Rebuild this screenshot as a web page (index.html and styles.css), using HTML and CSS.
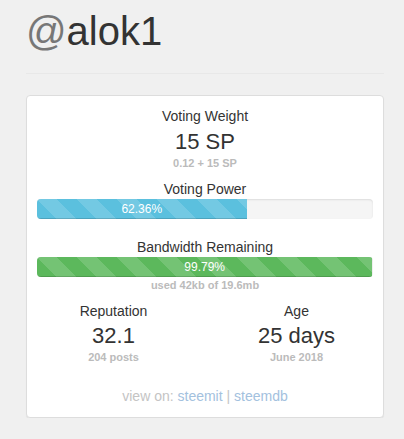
FILE: index.html
```html
<!DOCTYPE html>
<html>
<head>
<meta charset="utf-8">
<link rel="stylesheet" href="styles.css">
</head>
<body>
<div class="page">
  <h1 class="title"><span class="at">@</span>alok1</h1>
  <hr class="rule">
  <div class="card">
    <div class="label">Voting Weight</div>
    <div class="big big-first">15 SP</div>
    <div class="sub">0.12 + 15 SP</div>
    <div class="label label-gap">Voting Power</div>
    <div class="progress">
      <div class="bar bar-blue" style="width: 62.36%">62.36%</div>
    </div>
    <div class="label label-bw">Bandwidth Remaining</div>
    <div class="progress">
      <div class="bar bar-green" style="width: 99.79%">99.79%</div>
    </div>
    <div class="sub">used 42kb of 19.6mb</div>
    <div class="stats">
      <div class="stat">
        <div class="label">Reputation</div>
        <div class="big">32.1</div>
        <div class="sub">204 posts</div>
      </div>
      <div class="stat">
        <div class="label">Age</div>
        <div class="big">25 days</div>
        <div class="sub">June 2018</div>
      </div>
    </div>
    <div class="links">view on: <a href="#">steemit</a> | <a href="#">steemdb</a></div>
  </div>
</div>
</body>
</html>
```

FILE: styles.css
```css
html, body {
  margin: 0;
  padding: 0;
  background: #f0f0f0;
}
body {
  font-family: "Liberation Sans", Arial, sans-serif;
  color: #333;
  font-size: 14px;
}
.page {
  width: 358px;
  margin-left: 26px;
  padding-top: 9px;
}
.title {
  margin: 0;
  font-size: 40px;
  font-weight: normal;
  line-height: 44px;
  color: #333;
}
.title .at {
  color: #777;
}
.rule {
  margin: 20px 0 21px 0;
  border: 0;
  border-top: 1px solid #e8e8e8;
  height: 0;
}
.card {
  background: #fff;
  border: 1px solid #ddd;
  border-radius: 4px;
  box-shadow: 0 1px 1px rgba(0,0,0,.05);
  padding: 10px 10px 11px 10px;
  text-align: center;
}
.label {
  font-size: 14px;
  line-height: 20px;
}
.label-gap {
  margin-top: 9px;
}
.label-bw {
  margin-top: 18px;
}
.big {
  font-size: 22px;
  line-height: 26px;
  margin-top: 2px;
}
.big-first {
  margin-top: 3px;
}
.sub {
  font-size: 11px;
  line-height: 14px;
  font-weight: bold;
  color: #bbb;
  margin-top: 1px;
}
.progress {
  height: 20px;
  background: #f5f5f5;
  border-radius: 4px;
  box-shadow: inset 0 1px 2px rgba(0,0,0,.1);
  overflow: hidden;
  display: flex;
}
.bar {
  height: 20px;
  line-height: 20px;
  font-size: 12px;
  color: #fff;
  text-align: center;
  box-shadow: inset 0 -1px 0 rgba(0,0,0,.15);
  background-image: linear-gradient(45deg, rgba(255,255,255,.15) 25%, transparent 25%, transparent 50%, rgba(255,255,255,.15) 50%, rgba(255,255,255,.15) 75%, transparent 75%, transparent);
  background-size: 40px 40px;
}
.bar-blue {
  background-color: #5bc0de;
}
.bar-green {
  background-color: #5cb85c;
}
.stats {
  display: grid;
  grid-template-columns: 1fr 1fr;
  margin: 9px -15px 0 -15px;
}
.links {
  margin-top: 22px;
  font-size: 14px;
  line-height: 20px;
  color: #c4c4c4;
}
.links a {
  color: #a3c1de;
  text-decoration: none;
}
```
